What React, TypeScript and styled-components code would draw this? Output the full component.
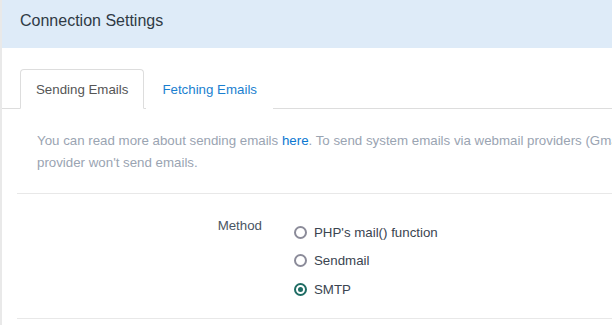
import { createGlobalStyle, styled } from "styled-components";

const GlobalStyle = createGlobalStyle`
  html, body {
    margin: 0;
    padding: 0;
    background: #e9e9e9;
    overflow: hidden;
    font-family: "Liberation Sans", Arial, sans-serif;
  }
`;

const methods = [
  { id: "mail", label: "PHP's mail() function" },
  { id: "sendmail", label: "Sendmail" },
  { id: "smtp", label: "SMTP" },
];

export default function App() {
  const selected = "smtp";

  return (
    <>
      <GlobalStyle />
      <Panel>
        <Header>
          <Title>Connection Settings</Title>
        </Header>
        <Tabs>
          <Tab $active>Sending Emails</Tab>
          <Tab>Fetching Emails</Tab>
        </Tabs>
        <Body>
          <Description>
            <Line $nowrap>
              You can read more about sending emails <LinkText>here</LinkText>. To send system emails via
              webmail providers (Gmail, Outlook, Yahoo) use SMTP, otherwise the
            </Line>
            <Line>provider won't send emails.</Line>
          </Description>
          <FormGroup>
            <Label>Method</Label>
            <Options>
              {methods.map((m) => (
                <Option key={m.id}>
                  <Radio $checked={m.id === selected} />
                  <span>{m.label}</span>
                </Option>
              ))}
            </Options>
          </FormGroup>
        </Body>
      </Panel>
    </>
  );
}

const Panel = styled.div`
  margin-left: 2px;
  width: 820px;
  height: 325px;
  background: #ffffff;
`;

const Header = styled.div`
  height: 48px;
  box-sizing: border-box;
  padding: 10px 18px 0;
  background: #deebf8;
`;

const Title = styled.div`
  font-size: 16px;
  line-height: 22px;
  color: #2f3a45;
`;

const Tabs = styled.div`
  display: flex;
  margin-top: 21px;
  padding-left: 18px;
  border-bottom: 1px solid #dddddd;
`;

const Tab = styled.div<{ $active?: boolean }>`
  height: 40px;
  box-sizing: border-box;
  padding: 0 15px;
  margin-right: 2px;
  margin-bottom: -1px;
  line-height: 39px;
  font-size: 13.3px;
  border: 1px solid ${(p) => (p.$active ? "#dddddd" : "transparent")};
  border-bottom-color: ${(p) => (p.$active ? "#ffffff" : "transparent")};
  border-radius: 4px 4px 0 0;
  background: #ffffff;
  color: ${(p) => (p.$active ? "#555555" : "#1a7fd0")};
`;

const Body = styled.div`
  padding-left: 15px;
`;

const Description = styled.div`
  padding: 21px 20px 19px;
  border-bottom: 1px solid #e8e8e8;
  font-size: 13.3px;
  line-height: 22px;
  color: #9aa4b2;
`;

const Line = styled.div<{ $nowrap?: boolean }>`
  white-space: ${(p) => (p.$nowrap ? "nowrap" : "normal")};
  overflow: hidden;
`;

const LinkText = styled.a`
  color: #0b78d1;
  text-decoration: none;
`;

const FormGroup = styled.div`
  display: flex;
  align-items: flex-start;
  gap: 32px;
  padding: 24px 0 14px;
  border-bottom: 1px solid #e8e8e8;
`;

const Label = styled.div`
  width: 245px;
  margin-top: -1px;
  text-align: right;
  font-size: 13.3px;
  line-height: 18px;
  color: #4a5563;
`;

const Options = styled.div`
  display: flex;
  flex-direction: column;
`;

const Option = styled.label`
  display: flex;
  align-items: center;
  gap: 7px;
  height: 28.5px;
  font-size: 13.3px;
  color: #3a4450;
`;

const Radio = styled.span<{ $checked?: boolean }>`
  position: relative;
  width: 13px;
  height: 13px;
  box-sizing: border-box;
  border-radius: 50%;
  border: 2px solid ${(p) => (p.$checked ? "#1f6c64" : "#8b8b99")};
  background: #ffffff;

  &::after {
    content: "";
    display: ${(p) => (p.$checked ? "block" : "none")};
    position: absolute;
    left: 2px;
    top: 2px;
    width: 5px;
    height: 5px;
    border-radius: 50%;
    background: #1f6c64;
  }
`;
